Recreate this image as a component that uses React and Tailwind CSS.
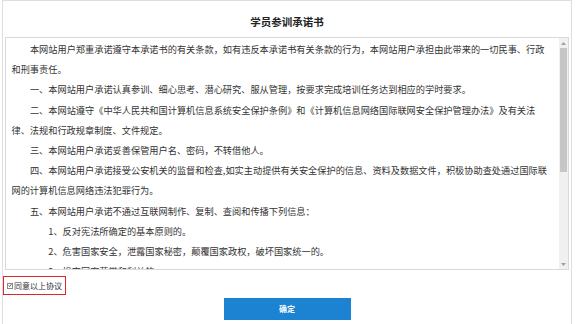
import React from "react";

const paras = [
  { indent: 2, text: "本网站用户郑重承诺遵守本承诺书的有关条款，如有违反本承诺书有关条款的行为，本网站用户承担由此带来的一切民事、行政和刑事责任。" },
  { indent: 2, text: "一、本网站用户承诺认真参训、细心思考、潜心研究、服从管理，按要求完成培训任务达到相应的学时要求。" },
  { indent: 2, text: "二、本网站遵守《中华人民共和国计算机信息系统安全保护条例》和《计算机信息网络国际联网安全保护管理办法》及有关法律、法规和行政规章制度、文件规定。" },
  { indent: 2, text: "三、本网站用户承诺妥善保管用户名、密码，不转借他人。" },
  { indent: 2, text: "四、本网站用户承诺接受公安机关的监督和检查,如实主动提供有关安全保护的信息、资料及数据文件，积极协助查处通过国际联网的计算机信息网络违法犯罪行为。" },
  { indent: 2, text: "五、本网站用户承诺不通过互联网制作、复制、查阅和传播下列信息：" },
  { indent: 4, text: "1、反对宪法所确定的基本原则的。" },
  { indent: 4, text: "2、危害国家安全，泄露国家秘密，颠覆国家政权，破坏国家统一的。" },
  { indent: 4, text: "3、损害国家荣誉和利益的。" },
  { indent: 4, text: "4、煽动民族仇恨、民族歧视，破坏民族团结的。" },
];

export default function App() {
  return (
    <div className="w-[576px] h-[324px] bg-white overflow-hidden text-[#333] font-['Noto_Sans_CJK_SC',sans-serif]">
      <div className="ml-[2px] w-[570px] h-full border-t border-x border-[#dedede] flex flex-col">
        {/* title */}
        <div className="h-[36px] pt-[6px] flex items-center justify-center">
          <h1 className="text-[10.5px] font-bold text-[#222]">学员参训承诺书</h1>
        </div>

        {/* agreement box */}
        <div className="ml-[2px] w-[564px] h-[233px] border border-[#d9d9d9] flex">
          <div className="flex-1 overflow-hidden pl-[5.5px] pr-[6px] pt-[1px] text-[9.2px] leading-[20.2px]">
            {paras.map((p, i) => (
              <p key={i} className={p.indent === 4 ? "indent-[4em]" : "indent-[2em]"}>
                {p.text}
              </p>
            ))}
          </div>
          <div className="w-[9px] bg-[#f0f0f0] flex flex-col items-center">
            <div className="h-[10px] flex items-center justify-center">
              <svg width="5" height="3" viewBox="0 0 5 3"><path d="M0 3 L2.5 0 L5 3 Z" fill="#a0a0a0" /></svg>
            </div>
            <div className="w-[7px] h-[124px] bg-[#c6c6c6]" />
            <div className="flex-1" />
            <div className="h-[10px] flex items-center justify-center">
              <svg width="5" height="3" viewBox="0 0 5 3"><path d="M0 0 L2.5 3 L5 0 Z" fill="#a0a0a0" /></svg>
            </div>
          </div>
        </div>

        {/* agree checkbox */}
        <div className="mt-[6px] flex">
          <label className="w-[63px] h-[19px] border-[1.5px] border-[#e0262b] flex items-center pl-[3px] gap-[1px] text-[8px] leading-none whitespace-nowrap text-[#333]">
            <span className="shrink-0 w-[6px] h-[6px] border border-[#8a8a8a] bg-white flex items-center justify-center">
              <svg width="5" height="5" viewBox="0 0 10 10"><path d="M1.5 5 L4 7.5 L8.5 2" stroke="#222" strokeWidth="2" fill="none" /></svg>
            </span>
            <span>同意以上协议</span>
          </label>
        </div>

        {/* confirm */}
        <div className="mt-[3px] flex justify-center">
          <button className="w-[127px] h-[22px] bg-[#1b83d2] text-white text-[8px] font-bold">确定</button>
        </div>
      </div>
    </div>
  );
}
